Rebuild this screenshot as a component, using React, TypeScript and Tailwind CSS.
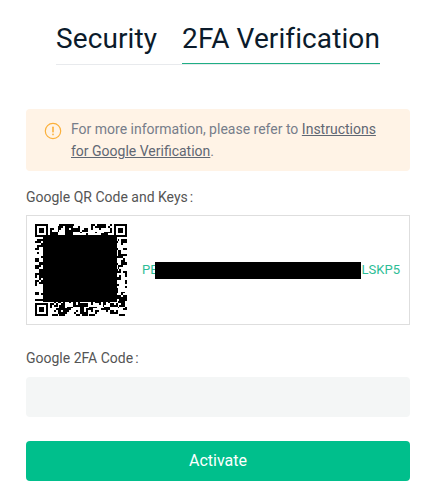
import React from 'react';

const SIZE = 49;

function isFinder(x: number, y: number) {
  return (x < 8 && y < 8) || (x >= SIZE - 8 && y < 8) || (x < 8 && y >= SIZE - 8);
}

// not a real code, the middle is blacked out in the picture anyway
function modules() {
  const cells: [number, number][] = [];
  for (let y = 0; y < SIZE; y++) {
    for (let x = 0; x < SIZE; x++) {
      if (isFinder(x, y)) continue;
      const a = x >> 1;
      const b = y >> 1;
      const n = (a * 7 + b * 13 + ((a * b) % 11) * 5 + (a ^ b) + ((x + y) % 4 === 0 ? 2 : 0)) % 9;
      if (n < 4) cells.push([x, y]);
    }
  }
  return cells;
}

function Finder({ x, y }: { x: number; y: number }) {
  return (
    <g>
      <rect x={x} y={y} width="7" height="7" fill="#000" />
      <rect x={x + 1} y={y + 1} width="5" height="5" fill="#fff" />
      <rect x={x + 2} y={y + 2} width="3" height="3" fill="#000" />
    </g>
  );
}

function QrCode() {
  return (
    <svg viewBox={`0 0 ${SIZE} ${SIZE}`} className="w-[92px] h-[92px] shrink-0" shapeRendering="crispEdges">
      <rect width={SIZE} height={SIZE} fill="#fff" />
      {modules().map(([x, y]) => (
        <rect key={`${x}-${y}`} x={x} y={y} width="1" height="1" fill="#000" />
      ))}
      <Finder x={0} y={0} />
      <Finder x={SIZE - 7} y={0} />
      <Finder x={0} y={SIZE - 7} />
      <rect x="4.26" y="5.86" width="39.4" height="35.7" fill="#000" />
    </svg>
  );
}

function Label({ text }: { text: string }) {
  return (
    <p className="text-[14px] leading-[20px] text-[#555]">
      {text}
      <span className="ml-[2px]">:</span>
    </p>
  );
}

export default function App() {
  return (
    <main className="w-[432px] h-[501px] bg-white pl-[26px] pr-[22px] font-['Roboto',sans-serif] overflow-hidden">
      <div className="flex justify-center pt-[20px]">
        <div className="flex border-b border-[#e8eaed] text-[28px] leading-[38px] tracking-[0.1px] text-[#0b1b2b]">
          <div className="pr-[25px] h-[44px]">Security</div>
          <div className="h-[44px] -mb-px border-b border-[#1fae85]">2FA Verification</div>
        </div>
      </div>

      <div className="mt-[44px] h-[62px] rounded bg-[#fff3e6] flex pl-[18px] pr-[20px] pt-[9px]">
        <svg viewBox="0 0 18 18" className="w-[18px] h-[18px] mt-[4px] shrink-0" fill="none">
          <circle cx="9" cy="9" r="7.7" stroke="#fbb03b" strokeWidth="1.2" />
          <rect x="8.2" y="4.6" width="1.6" height="5.8" rx="0.6" fill="#fbb03b" />
          <rect x="8.2" y="11.6" width="1.6" height="1.7" rx="0.6" fill="#fbb03b" />
        </svg>
        <p className="ml-[9px] text-[14px] leading-[22px] text-[#767d8a]">
          For more information, please refer to{' '}
          <a className="underline text-[#5f6773]">Instructions for Google Verification</a>.
        </p>
      </div>

      <div className="mt-[16px]">
        <Label text="Google QR Code and Keys" />
      </div>

      <div className="mt-[8px] h-[110px] border border-[#dedede] flex items-center pl-[8px]">
        <QrCode />
        <div className="ml-[15px] flex items-center text-[13px] text-[#2dbd96]">
          <span>PE</span>
          <span className="-ml-[3px] w-[206px] h-[17px] bg-black" />
          <span className="ml-[1px]">LSKP5</span>
        </div>
      </div>

      <div className="mt-[23px]">
        <Label text="Google 2FA Code" />
      </div>

      <div className="mt-[9px] h-[40px] rounded bg-[#f4f6f6]" />

      <button className="mt-[24px] w-full h-[40px] rounded bg-[#00bf8c] text-white text-[16px]">
        Activate
      </button>
    </main>
  );
}
